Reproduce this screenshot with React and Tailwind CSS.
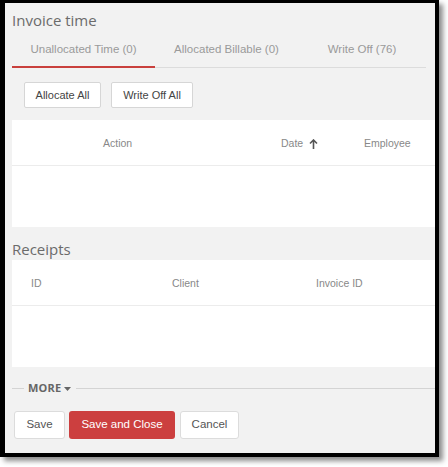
import React from "react";

export default function App() {
  return (
    <div className="w-[448px] h-[467px] bg-white" style={{ fontFamily: '"Liberation Sans", Arial, sans-serif' }}>
      <div className="w-[439px] h-[457px] border-l-[5px] border-t-[3px] border-r-4 border-b-4 border-black bg-[#f2f2f2] shadow-[4px_4px_5px_rgba(0,0,0,0.45)] flex flex-col overflow-hidden">
        {/* Invoice time */}
        <div className="pl-[7px] pt-[7px] h-[27px] text-[15px] leading-[20px] text-[#6b6b6b]" style={{ fontFamily: '"Open Sans", sans-serif' }}>
          Invoice time
        </div>
        <div className="ml-[7px] w-[414px] flex border-b border-[#dcdcdc] h-[38px] text-[11.5px] text-[#9a9a9a]">
          <div className="w-[143px] pt-[3px] flex items-center justify-center border-b-2 border-[#c9403d] -mb-px">Unallocated Time (0)</div>
          <div className="w-[143px] pt-[3px] flex items-center justify-center">Allocated Billable (0)</div>
          <div className="flex-1 pt-[3px] flex items-center justify-center">Write Off (76)</div>
        </div>
        <div className="flex gap-[10px] pl-[19px] pt-[14px] h-[52px]">
          <button className="h-[26px] w-[77px] bg-white border border-[#d6d6d6] rounded-[2px] text-[11px] text-[#444]">Allocate All</button>
          <button className="h-[26px] w-[82px] bg-white border border-[#d6d6d6] rounded-[2px] text-[11px] text-[#444]">Write Off All</button>
        </div>
        <div className="ml-[7px] bg-white h-[107px] flex flex-col">
          <div className="h-[46px] border-b border-[#ececec] relative text-[10.5px] text-[#888]">
            <span className="absolute left-[91px] top-[16px]">Action</span>
            <span className="absolute left-[269px] top-[16px] flex items-center gap-[6px]">
              Date
              <svg width="9" height="10" viewBox="0 0 9 10">
                <path d="M4.5 1 L4.5 10 M1 4.5 L4.5 1 L8 4.5" stroke="#555" strokeWidth="1.6" fill="none" />
              </svg>
            </span>
            <span className="absolute left-[352px] top-[16px]">Employee</span>
          </div>
        </div>
        <div className="pl-[7px] pt-[12px] h-[33px] text-[15px] leading-[20px] text-[#6b6b6b]" style={{ fontFamily: '"Open Sans", sans-serif' }}>
          Receipts
        </div>
        <div className="ml-[7px] bg-white h-[107px] flex flex-col">
          <div className="h-[46px] border-b border-[#ececec] relative text-[10.5px] text-[#888]">
            <span className="absolute left-[19px] top-[16px]">ID</span>
            <span className="absolute left-[160px] top-[16px]">Client</span>
            <span className="absolute left-[304px] top-[16px]">Invoice ID</span>
          </div>
        </div>
        <div className="ml-[7px] mt-[14px] h-[15px] flex items-center">
          <div className="w-[12px] h-px bg-[#d4d4d4]"></div>
          <span className="ml-[4px] text-[11px] font-bold text-[#666] tracking-[0.2px]" style={{ fontFamily: '"Open Sans", sans-serif' }}>MORE</span>
          <svg className="ml-[3px]" width="7" height="4" viewBox="0 0 7 4"><path d="M0 0 L7 0 L3.5 4 Z" fill="#666" /></svg>
          <div className="ml-[5px] flex-1 h-px bg-[#d4d4d4]"></div>
        </div>
        <div className="flex gap-[4px] pl-[9px] mt-[15px]">
          <button className="h-[28px] w-[51px] bg-white border border-[#dcdcdc] rounded-[3px] text-[11.5px] text-[#555]">Save</button>
          <button className="h-[28px] w-[106px] bg-[#cc3f3f] rounded-[3px] text-[11.5px] text-white">Save and Close</button>
          <button className="ml-[1px] h-[28px] w-[59px] bg-white border border-[#dcdcdc] rounded-[3px] text-[11.5px] text-[#555]">Cancel</button>
        </div>
      </div>
    </div>
  );
}
